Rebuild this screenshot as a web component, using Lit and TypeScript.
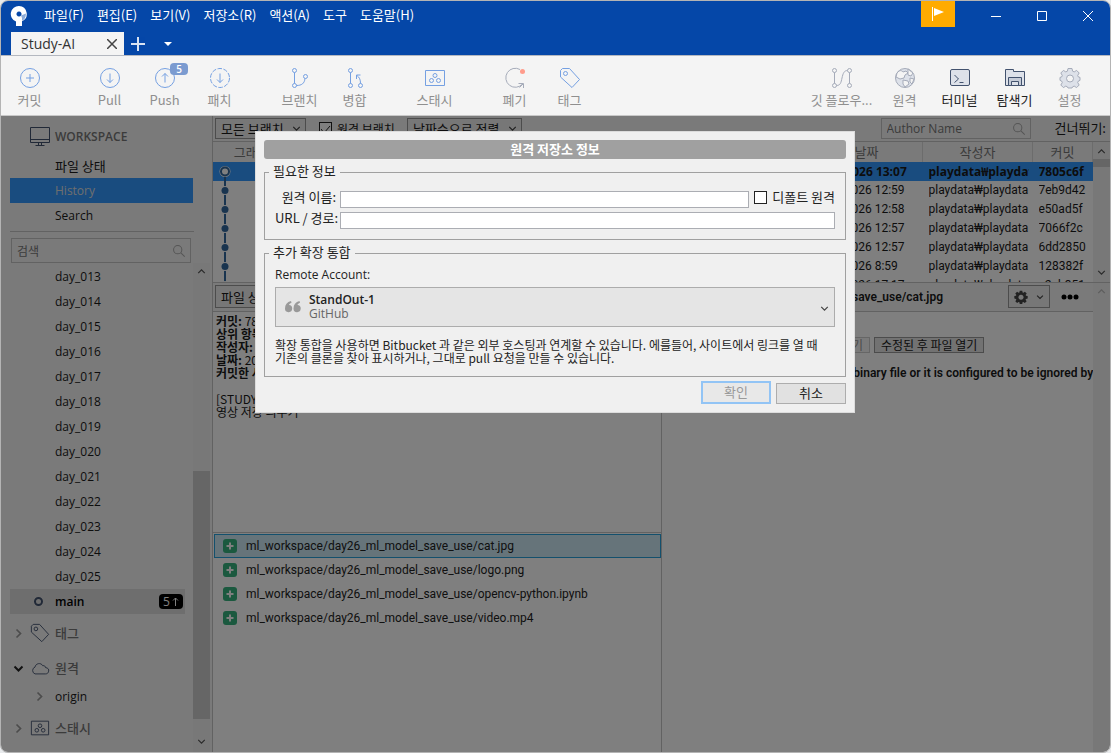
import { LitElement, html, css, svg, nothing } from "lit";
import { customElement, property } from "lit/decorators.js";

type Glyph = ReturnType<typeof svg>;

const ICONS: Record<string, Glyph> = {
  commit: svg`<circle cx="11" cy="11" r="9.5"/><path d="M11 7v8M7 11h8"/>`,
  pull: svg`<circle cx="11" cy="11" r="9.5"/><path d="M11 6.5v9M8 12.500l3 3 3-3"/>`,
  push: svg`<circle cx="11" cy="11" r="9.5"/><path d="M11 15.500v-9M8 9.500l3-3 3 3"/>`,
  fetch: svg`<circle cx="11" cy="11" r="9.500" stroke-dasharray="4.500 1.500"/><path d="M11 6.500v9M8 12.500l3 3 3-3"/>`,
  branch: svg`<circle cx="5.500" cy="3.500" r="2"/><circle cx="5.500" cy="18.500" r="2"/><circle cx="16.500" cy="9.500" r="2"/><path d="M5.500 5.500v11M7.500 18.500c5 0 8-2 8.500-7"/>`,
  merge: svg`<circle cx="6.500" cy="3.500" r="2"/><circle cx="6.500" cy="18.500" r="2"/><circle cx="16.500" cy="18.500" r="2"/><path d="M6.500 5.500v11M16.500 16.500c0-4-1-6-3.500-8M12.500 12V8h4"/>`,
  stash: svg`<path d="M1.500 3.500h19v15h-19z"/><circle cx="11" cy="8.500" r="2"/><circle cx="7.500" cy="13.500" r="2"/><circle cx="14.500" cy="13.500" r="2"/>`,
  discard: svg`<path d="M16 2.500A9.500 9.500 0 1 0 18.500 17M14.500 16.500h5v4.500M19 17l-3.500 3.500"/><circle cx="18.500" cy="4.500" r="2.500" fill="#ff9c8c" stroke="none"/>`,
  tag: svg`<path d="M1.500 3.500l2-2h7l10 11-7.500 8-11.500-10.500z" stroke-linejoin="round"/><circle cx="6.500" cy="6.500" r="2"/>`,
  flow: svg`<circle cx="3.500" cy="3.500" r="2"/><circle cx="3.500" cy="18.500" r="2"/><circle cx="18.500" cy="3.500" r="2"/><circle cx="18.500" cy="18.500" r="2"/><path d="M3.500 5.500v11M18.500 5.500v11M5.500 18.500c4 0 4.500-3 5.500-7.500s2-7.500 5.500-7.500"/>`,
  globe: svg`<circle cx="11" cy="11" r="9.500" fill="#dde1e9"/><path fill="#f4f4f4" d="M5 4c2-1 3 0 4 1l3-1 2 2-3 2-1 3-4 1-4-2 1-4zM14 2l5 4-2 3-3-1zM9 13l5 1 1 3-4 3-2-3zM16 11l4 1-2 5-2-2z"/>`,
  terminal: svg`<rect x="1.500" y="2.500" width="19" height="16" rx="1.500" fill="#dde1e9"/><path d="M5.500 8l4 4-4 3.500M10.500 15.500h4"/>`,
  explorer: svg`<path fill="#dde1e9" d="M1.500 18.500v-16h8v2h11v14z"/><path fill="#c6ccd8" d="M4.500 18.500v-8h13v8h-3v-4h-7v4z"/>`,
  gear: svg`<path fill="#dde1e9" d="M9 1.500h4l.6 2.700 1.600.7 2.400-1.500 2.600 2.600-1.500 2.400.7 1.600 1.600.4v3l-1.600.6-.7 1.600 1.500 2.400-2.600 2.600-2.400-1.500-1.600.7-.6 1.200H9l-.6-1.200-1.600-.7-2.400 1.500L1.800 18l1.500-2.400-.7-1.600-1.600-.6v-3l1.600-.4.7-1.600L1.800 6l2.600-2.600 2.400 1.500 1.600-.7z"/><circle cx="11" cy="11.500" r="3.500" fill="#f4f4f4"/>`,
  cog: svg`<path fill="currentColor" stroke="none" fill-rule="evenodd" d="M9 1h4l.5 2.900 1.300.5 2.300-1.700 2.900 2.900-1.700 2.300.6 1.300L21.500 9.500v4l-2.700.5-.6 1.300 1.700 2.300-2.900 2.900-2.300-1.700-1.300.6-.4 2.600H9l-.5-2.600-1.300-.6-2.300 1.700L2 17.600l1.700-2.300-.6-1.300-2.600-.5v-4l2.600-.3.600-1.300L2 5.600l2.900-2.900 2.300 1.700 1.300-.5zM11 7.500a4 4 0 1 0 .01 0z"/>`,
  monitor: svg`<path d="M1.500 1.500h19v15h-19zM1.500 13.500h19M9.500 17v2M12.500 17v2M6.500 19.500h9"/>`,
  cloud: svg`<path d="M5.500 17.500a4 4 0 0 1 0-7.500c.5-4 6.500-5.500 8.500-1.500 2-.5 3 .8 3 2 3 .5 4 2 3.500 4-.4 2-1.500 3-3.500 3z"/>`,
  search: svg`<circle cx="9" cy="9" r="6.500" stroke-width="1.600"/><path d="M14 14l6 6" stroke-width="1.600"/>`,
  chevronRight: svg`<path d="M7 3l8 8-8 8" stroke-width="3.500"/>`,
  chevronDown: svg`<path d="M3 7l8 8 8-8" stroke-width="4"/>`,
  up: svg`<path d="M3 15l8-8 8 8" stroke-width="3"/>`,
  down: svg`<path d="M3 7l8 8 8-8" stroke-width="3"/>`,
};

const icon = (name: string, size = 22) =>
  html`<svg class="icon" viewBox="0 0 22 22" width=${size} height=${size} aria-hidden="true">${ICONS[name]}</svg>`;

const shared = css`
  * { box-sizing: border-box; }
  button, input, select { font: inherit; color: inherit; margin: 0; border-radius: 0; }
  button { padding: 0; border: 0; background: none; }
  .icon { display: block; flex: none; fill: none; stroke: currentColor; stroke-width: 1; overflow: visible; }
  .latin { font-family: "Open Sans", "Noto Sans CJK KR", sans-serif; font-size: 12px; }
  .narrow { font-family: Roboto, "Noto Sans CJK KR", sans-serif; font-size: 12px; }
`;

@customElement("title-bar")
export class TitleBar extends LitElement {
  static styles = [shared, css`
    :host { display: block; background: #0547a8; color: #fff; }
    .top { display: flex; height: 31px; align-items: flex-start; }
    .logo { margin: 4px 16px 0 9px; }
    .menu { display: flex; gap: 13px; height: 27px; align-items: center; }
    .spacer { flex: 1; }
    .flag { width: 34px; height: 26px; background: #ffab00; display: grid; place-items: center; margin-right: 18px; }
    .sys { width: 46px; height: 29px; display: grid; place-items: center; }
    .sys:last-child { width: 45px; }
    .tabs { display: flex; height: 23px; padding-left: 10px; align-items: stretch; }
    .tab { width: 113px; background: #f4f4f4; color: #333; display: flex; align-items: center; justify-content: space-between; padding: 0 7px 0 10px; }
    .tab-name { font: 14px/23px "Open Sans", sans-serif; }
    .add { width: 28px; display: grid; place-items: center; }
    .more { width: 31px; display: grid; place-items: center; }
  `];
  render() {
    const menus = ["파일(F)", "편집(E)", "보기(V)", "저장소(R)", "액션(A)", "도구", "도움말(H)"];
    return html`
      <div class="top">
        <svg class="logo" width="18" height="22" viewBox="0 0 18 22" aria-hidden="true">
          <path fill="#fff" fill-rule="evenodd" d="M9 1a8 8 0 0 1 3 15.300V21H6v-4.500A8 8 0 0 1 9 1zm0 5.500a2.500 2.500 0 1 0 .01 0z"/>
          <path fill="#0547a8" opacity=".45" d="M11 10.500l5-2c-.2 4-1.500 6-4 7.300V13z"/>
        </svg>
        <nav class="menu">${menus.map((m) => html`<button>${m}</button>`)}</nav>
        <span class="spacer"></span>
        <button class="flag" aria-label="알림"><svg width="12" height="14" viewBox="0 0 12 14"><path d="M0 0h1v14H0zM2 1l10 4-10 4z" fill="#fff"/></svg></button>
        <button class="sys" aria-label="최소화"><svg width="10" height="10"><path d="M0 5.500h10" stroke="#fff"/></svg></button>
        <button class="sys" aria-label="최대화"><svg width="10" height="10"><path d="M.5.500h9v9h-9z" stroke="#fff" fill="none"/></svg></button>
        <button class="sys" aria-label="닫기"><svg width="10" height="10"><path d="M0 0l10 10M10 0L0 10" stroke="#fff"/></svg></button>
      </div>
      <div class="tabs">
        <div class="tab"><span class="tab-name">Study-AI</span>
          <button aria-label="탭 닫기"><svg width="10" height="10"><path d="M0 0l10 10M10 0L0 10" stroke="#444" stroke-width="1.500"/></svg></button></div>
        <button class="add" aria-label="새 탭"><svg width="14" height="14"><path d="M7 0v14M0 7h14" stroke="#fff" stroke-width="2" opacity=".85"/></svg></button>
        <button class="more" aria-label="탭 목록"><svg width="8" height="4"><path d="M0 0h8l-4 4z" fill="#fff"/></svg></button>
      </div>`;
  }
}

@customElement("tool-bar")
export class ToolBar extends LitElement {
  static styles = [shared, css`
    :host { display: flex; justify-content: space-between; height: 61px; background: #f4f4f4; border-top: 1px solid #b4b8c0; border-bottom: 1px solid #c8c8c8; padding: 0 13px 0 1px; }
    .side, .group { display: flex; }
    .side { gap: 25px; }
    .tool { width: 55px; display: flex; flex-direction: column; align-items: center; padding-top: 11px; gap: 2px; position: relative; color: #8f8f8f; line-height: 18px; white-space: nowrap; }
    .tool.wide { width: 71px; }
    .tool .icon { color: #75a0e2; }
    .tool.gray .icon { color: #a5abb9; }
    .tool.active { color: #222; }
    .tool.active .icon { color: #42526e; }
    .badge { position: absolute; left: 33px; top: 7px; width: 18px; height: 12px; border-radius: 4px; background: #7b9bd0; color: #fff; font: 600 10px/12px "Open Sans", sans-serif; text-align: center; }
  `];
  tool(name: string, label: string, cls = "", badge = "") {
    return html`<button class="tool ${cls}">${icon(name)}<span>${label}</span>${badge ? html`<span class="badge">${badge}</span>` : nothing}</button>`;
  }
  render() {
    return html`
      <div class="side">
        <div class="group">${this.tool("commit", "커밋")}</div>
        <div class="group">${this.tool("pull", "Pull")}${this.tool("push", "Push", "", "5")}${this.tool("fetch", "패치")}</div>
        <div class="group">${this.tool("branch", "브랜치")}${this.tool("merge", "병합")}</div>
        <div class="group">${this.tool("stash", "스태시")}</div>
        <div class="group">${this.tool("discard", "폐기", "gray")}${this.tool("tag", "태그")}</div>
      </div>
      <div class="group">
        ${this.tool("flow", "깃 플로우...", "gray wide")}${this.tool("globe", "원격", "gray")}
        ${this.tool("terminal", "터미널", "active")}${this.tool("explorer", "탐색기", "active")}${this.tool("gear", "설정", "gray")}
      </div>`;
  }
}

@customElement("side-bar")
export class SideBar extends LitElement {
  static styles = [shared, css`
    :host { display: flex; flex-direction: column; width: 212px; flex: none; background: #f5f5f5; border-right: 1px solid #c4c4c4; color: #1a1a1a; min-height: 0; }
    .head { display: flex; align-items: center; gap: 4px; height: 42px; padding-left: 28px; color: #777; }
    .head .icon, .section .icon { color: #42526e; }
    .head strong { font: 600 12px/18px "Open Sans", sans-serif; }
    .nav { padding: 0 19px 3px 9px; margin-top: -5px; }
    .nav button { display: block; width: 100%; height: 25px; text-align: left; padding-left: 45px; }
    .nav .current { background: #39f; color: #ddd; }
    .rule { border-top: 1px solid #c4c4c4; margin: 0 18px 0 9px; }
    .find { margin: 6px 21px 0 10px; display: flex; align-items: center; border: 1px solid #c4c4c4; height: 25px; padding-right: 4px; color: #aaa; }
    .find input { flex: 1; min-width: 0; border: 0; background: none; padding: 0 5px; font-size: 12px; }
    .find input::placeholder { color: #777; opacity: 1; }
    .scroll { display: flex; flex: 1; min-height: 0; }
    .tree { flex: 1; min-width: 0; overflow: hidden; padding: 1px 0 0 9px; }
    .leaf { display: flex; align-items: center; height: 25px; padding-left: 45px; }
    .leaf.main { margin-right: 8px; background: #ddd; font-weight: 600; padding: 0 2px 0 24px; gap: 12px; color: #000; }
    .main .name { flex: 1; }
    .ring { width: 9px; height: 9px; border: 2px solid #42526e; border-radius: 50%; }
    .ahead { background: #000; color: #fff; border-radius: 4px; width: 24px; height: 15px; line-height: 15px; font-weight: 400; display: flex; justify-content: center; gap: 2px; }
    .section { display: flex; align-items: center; gap: 5px; height: 32px; color: #777; font-weight: 500; }
    .section.first { height: 38px; }
    .section .fold { width: 15px; padding-left: 3px; }
    .section .fold .icon { color: #999; }
    .section .fold.open .icon { color: #222; }
    .leaf.origin { padding-left: 24px; gap: 10px; }
    .origin .icon { color: #999; }
    .bar { width: 17px; margin-right: 2px; display: flex; flex-direction: column; align-items: center; color: #555; background: #f0f0f0; padding: 4px 0 6px; }
    .track { flex: 1; width: 100%; padding: 195px 0 18px; display: flex; }
    .thumb { flex: 1; background: #cdcdcd; }
  `];
  render() {
    const days = Array.from({ length: 13 }, (_, i) => `day_0${i + 13}`);
    return html`
      <div class="head">${icon("monitor", 22)}<strong>WORKSPACE</strong></div>
      <nav class="nav">
        <button>파일 상태</button><button class="current latin">History</button><button class="latin">Search</button>
      </nav>
      <div class="rule"></div>
      <label class="find"><input aria-label="검색" placeholder="검색" />${icon("search", 14)}</label>
      <div class="scroll">
        <div class="tree">
          ${days.map((d) => html`<div class="leaf latin">${d}</div>`)}
          <div class="leaf main latin"><span class="ring"></span><span class="name">main</span>
            <span class="ahead">5<svg width="7" height="15" aria-hidden="true"><path d="M3.500 12V4M1 6.500L3.500 4 6 6.500" fill="none" stroke="#fff"/></svg></span></div>
          <div class="section first"><span class="fold">${icon("chevronRight", 11)}</span>${icon("tag", 20)}<span>태그</span></div>
          <div class="section"><span class="fold open">${icon("chevronDown", 11)}</span>${icon("cloud", 20)}<span>원격</span></div>
          <div class="leaf origin latin">${icon("chevronRight", 11)}origin</div>
          <div class="section first"><span class="fold">${icon("chevronRight", 11)}</span>${icon("stash", 20)}<span>스태시</span></div>
        </div>
        <div class="bar">${icon("up", 9)}<div class="track"><div class="thumb"></div></div>${icon("down", 9)}</div>
      </div>`;
  }
}

interface Row { date: string; hash: string; author: string; }

@customElement("commit-log")
export class CommitLog extends LitElement {
  static styles = [shared, css`
    :host { display: flex; flex-direction: column; height: 167px; flex: none; border-bottom: 1px solid #c4c4c4; background: #fff; }
    .filters { display: flex; align-items: center; height: 26px; flex: none; border-bottom: 1px solid #c4c4c4; background: #f5f5f5; padding: 0 4px 0 2px; }
    .pick { position: relative; display: flex; align-items: center; }
    .pick select { appearance: none; height: 21px; border: 1px solid #999; background: #eee; padding: 0 21px 0 5px; }
    .pick .icon { position: absolute; right: 5px; color: #444; pointer-events: none; }
    .check { position: relative; display: flex; align-items: center; gap: 5px; margin: 0 12px 0 13px; font-size: 12px; }
    .check input { appearance: none; width: 13px; height: 13px; border: 1px solid #222; background: #fff; }
    .check svg { position: absolute; left: 2px; top: 5px; pointer-events: none; }
    .spacer { flex: 1; }
    .author { display: flex; align-items: center; width: 150px; height: 21px; border: 1px solid #c4c4c4; padding-right: 4px; color: #aaa; margin-right: 24px; }
    .author input { flex: 1; min-width: 0; border: 0; background: none; padding: 0 5px; }
    .author input::placeholder { color: #777; opacity: 1; }
    .jump { line-height: 16px; padding-bottom: 2px; }
    .list { display: flex; flex: 1; min-height: 0; overflow: hidden; }
    .rows { flex: 1; min-width: 0; overflow: hidden; }
    table { width: 100%; table-layout: fixed; border-collapse: collapse; }
    th { height: 20px; padding: 0; font-weight: 400; color: #777; background: #f5f5f5; border-right: 1px solid #d8d8d8; line-height: 18px; }
    td { height: 19px; padding: 0 4px 0 6px; line-height: 19px; }
    td:first-child { padding: 0; }
    td.when { padding-left: 8px; }
    td div { overflow: hidden; white-space: nowrap; height: 19px; }
    .on { background: #39f; font-weight: 700; }
    .graph { width: 78px; } .date { width: 112px; } .who { width: 110px; } .hash { width: 60px; }
    .bar { width: 17px; background: #f0f0f0; display: flex; flex-direction: column; align-items: center; color: #555; padding: 5px 0; }
    .thumb { width: 100%; height: 8px; background: #cdcdcd; margin: 3px 0 auto; }
    td svg { display: block; }
  `];
  rows: Row[] = [
    { date: "27 2 2026 13:07", author: "playdata₩playdata", hash: "7805c6f" },
    { date: "27 2 2026 12:59", author: "playdata₩playdata", hash: "7eb9d42" },
    { date: "27 2 2026 12:58", author: "playdata₩playdata", hash: "e50ad5f" },
    { date: "27 2 2026 12:57", author: "playdata₩playdata", hash: "7066f2c" },
    { date: "27 2 2026 12:57", author: "playdata₩playdata", hash: "6dd2850" },
    { date: "27 2 2026 8:59", author: "playdata₩playdata", hash: "128382f" },
    { date: "26 2 2026 17:17", author: "playdata₩playdata", hash: "e2eb351" },
  ];
  render() {
    return html`
      <div class="filters">
        <span class="pick"><select aria-label="브랜치"><option>모든 브랜치</option></select>${icon("down", 9)}</span>
        <label class="check"><input type="checkbox" checked />원격 브랜치<svg width="10" height="9"><path d="M0 4l3 4 6-7" fill="none" stroke="#222"/></svg></label>
        <span class="pick"><select aria-label="정렬"><option>날짜순으로 정렬</option></select>${icon("down", 9)}</span>
        <span class="spacer"></span>
        <label class="author latin"><input aria-label="Author Name" placeholder="Author Name" />${icon("search", 14)}</label>
        <span class="jump">건너뛰기:</span>
      </div>
      <div class="list">
        <div class="rows"><table>
          <thead><tr><th class="graph">그래프</th><th>설명</th><th class="date">날짜</th><th class="who">작성자</th><th class="hash">커밋</th></tr></thead>
          <tbody>${this.rows.map((r, i) => html`<tr class=${i ? "narrow" : "latin on"}>
            <td><svg width="24" height="19" aria-hidden="true">
              <path d=${i ? "M12 0v19" : "M12 10v9"} stroke="#33689e" stroke-width="2"/>
              ${i ? svg`<circle cx="12" cy="9.500" r="4.500" fill="#fff"/><circle cx="12" cy="9.500" r="3.500" fill="#33689e"/>`
                  : svg`<circle cx="12" cy="9.500" r="5.500" fill="#fff"/><circle cx="12" cy="9.500" r="4" fill="#fff" stroke="#33689e" stroke-width="2"/>`}
            </svg></td>
            <td></td><td class="when"><div>${r.date}</div></td><td><div>${r.author}</div></td><td><div>${r.hash}</div></td></tr>`)}</tbody>
        </table></div>
        <div class="bar">${icon("up", 9)}<span class="thumb"></span>${icon("down", 9)}</div>
      </div>`;
  }
}

@customElement("commit-detail")
export class CommitDetail extends LitElement {
  static styles = [shared, css`
    :host { display: flex; flex: 1; min-height: 0; background: #fff; }
    .left { width: 449px; flex: none; display: flex; flex-direction: column; border-right: 1px solid #c4c4c4; }
    .bar { height: 29px; flex: none; display: flex; align-items: center; background: #f5f5f5; border-bottom: 1px solid #c4c4c4; padding: 0 2px 1px; }
    .bar button { height: 23px; border: 1px solid #999; background: #eee; padding: 0 5px; }
    .info { height: 221px; flex: none; padding: 2px 3px; font-size: 12px; line-height: 13px; border-bottom: 1px solid #c4c4c4; }
    .info p { margin: 0; min-height: 13px; }
    .info b { font-weight: 600; }
    .files { margin: 0; padding: 1px 0 0 1px; list-style: none; }
    .file { display: flex; align-items: center; gap: 9px; height: 24px; padding-left: 8px; border: 1px solid transparent; color: #222; }
    .file.on { background: #cce8f5; border-color: #26a0da; }
    .right { flex: 1; min-width: 0; display: flex; }
    .view { flex: 1; min-width: 0; overflow: hidden; }
    .title { justify-content: flex-end; padding-right: 14px; font-weight: 600; white-space: nowrap; }
    .title > * { flex: none; }
    .title .gear { display: flex; align-items: center; gap: 8px; width: 42px; margin: 0 11px 0 65px; color: #444; }
    .acts { display: flex; gap: 4px; padding: 25px 0 0 99px; }
    .acts button { height: 16px; line-height: 14px; border: 1px solid #999; background: #e4e4e4; padding: 0 6px; font-size: 12px; }
    .acts button:disabled { color: #999; border-color: #ccc; background: #f5f5f5; }
    .acts button:first-child { width: 109px; text-align: right; }
    .note { margin: 11px 0 0 66px; white-space: nowrap; font-weight: 600; line-height: 18px; }
    .scroll { width: 17px; background: #f0f0f0; display: flex; justify-content: center; padding-top: 4px; color: #bbb; }
  `];
  render() {
    const files = ["cat.jpg", "logo.png", "opencv-python.ipynb", "video.mp4"];
    return html`
      <section class="left">
        <div class="bar"><button>파일 상태 순으로 정렬</button></div>
        <div class="info">
          <p><b>커밋:</b> 7805c6f</p><p><b>상위 항목:</b> 7eb9d42</p><p><b>작성자:</b> playdata</p>
          <p><b>날짜:</b> 2026 13:07</p><p><b>커밋한 사람:</b> playdata</p><p></p>
          <p>[STUDY]</p><p>영상 저장 띄우기</p>
        </div>
        <ul class="files">${files.map((f, i) => html`<li class="file narrow ${i ? "" : "on"}">
          <svg width="14" height="14" aria-hidden="true"><rect width="14" height="14" rx="3" fill="#36b37e"/><path d="M7 3.500v7M3.500 7h7" stroke="#fff" stroke-width="2"/></svg>
          <span>ml_workspace/day26_ml_model_save_use/${f}</span></li>`)}</ul>
      </section>
      <section class="right">
        <div class="view">
          <div class="bar title narrow"><span>ml_workspace/day26_ml_model_save_use/cat.jpg</span>
            <button class="gear" aria-label="설정">${icon("cog", 14)}${icon("down", 8)}</button>
            <svg width="18" height="6" aria-hidden="true"><circle cx="3" cy="3" r="2.500"/><circle cx="9" cy="3" r="2.500"/><circle cx="15" cy="3" r="2.500"/></svg></div>
          <div class="acts"><button disabled>원본 파일 열기</button><button>수정된 후 파일 열기</button></div>
          <p class="note narrow">Selected file is either a binary file or it is configured to be ignored by Sourcetree</p>
        </div>
        <div class="scroll">${icon("up", 9)}</div>
      </section>`;
  }
}

@customElement("remote-dialog")
export class RemoteDialog extends LitElement {
  @property() account = "StandOut-1";
  static styles = [shared, css`
    :host { display: block; width: 600px; border: 1px solid #dcdcdc; background: #f0f0f0; padding: 8px; color: #222; }
    h2 { margin: 0 0 5px; height: 19px; line-height: 18px; font-size: 13px; font-weight: 700; color: #fff; background: #a0a0a0; border-radius: 3px; text-align: center; }
    fieldset { border: 1px solid #a0a0a0; margin: 0; padding: 0 10px; min-width: 0; }
    legend { padding: 0 4px; margin-left: -6px; height: 16px; line-height: 14px; }
    .basic { height: 76px; }
    .fields { display: grid; grid-template-columns: 61px 1fr auto; column-gap: 4px; row-gap: 4px; padding-top: 11px; align-items: start; }
    .fields label { text-align: right; line-height: 12px; white-space: nowrap; }
    .fields input[type="text"] { width: 100%; height: 17px; border: 1px solid #abadb3; background: #fff; padding: 0 3px; }
    .fields .url { grid-column: 2 / 4; }
    .fields .def { display: flex; gap: 5px; padding-left: 1px; }
    .def input { appearance: none; width: 13px; height: 13px; border: 1px solid #222; background: #fff; }
    .extra { height: 132px; margin-top: 5px; }
    .cap { display: block; line-height: 18px; padding-top: 5px; }
    .account { position: relative; margin-top: 3px; height: 40px; }
    .account select { appearance: none; width: 100%; height: 40px; border: 1px solid #acacac; background: #e5e5e5; padding: 0 24px 15px 33px; font-weight: 600; color: #222; }
    .account .host { position: absolute; left: 34px; top: 19px; line-height: 16px; color: #666; pointer-events: none; }
    .account .quote { position: absolute; left: 10px; top: 14px; pointer-events: none; }
    .account .icon { position: absolute; right: 6px; top: 17px; color: #444; pointer-events: none; }
    .help { margin: 11px 0 0; font-size: 12px; line-height: 13px; word-break: keep-all; }
    .foot { display: flex; justify-content: flex-end; align-items: flex-end; gap: 5px; margin-top: 4px; }
    .foot button { width: 70px; height: 21px; border: 1px solid #adadad; background: #e1e1e1; line-height: 16px; padding-bottom: 2px; }
    .foot .ok { height: 23px; border: 2px solid #92c4f5; background: #e8e8e8; color: #999; }
  `];
  render() {
    return html`
      <h2>원격 저장소 정보</h2>
      <fieldset class="basic"><legend>필요한 정보</legend>
        <div class="fields">
          <label for="name">원격 이름:</label><input id="name" type="text" />
          <label class="def"><input type="checkbox" />디폴트 원격</label>
          <label for="url">URL / 경로:</label><input id="url" class="url" type="text" />
        </div>
      </fieldset>
      <fieldset class="extra"><legend>추가 확장 통합</legend>
        <label class="cap latin" for="acct">Remote Account:</label>
        <div class="account latin">
          <select id="acct"><option>${this.account}</option></select>
          <span class="host">GitHub</span>
          <svg class="quote" width="16" height="12" viewBox="0 0 16 12" aria-hidden="true"><path fill="#999" d="M6 0C2 1 0 3.500 0 7.500a3.600 3.600 0 1 0 4-3.500C4.300 3 5 2.300 6.500 1.800zM14.500 0c-4 1-6 3.500-6 7.500a3.600 3.600 0 1 0 4-3.500c.3-1 1-1.700 2.500-2.200z"/></svg>
          ${icon("down", 9)}
        </div>
        <p class="help">확장 통합을 사용하면 Bitbucket 과 같은 외부 호스팅과 연계할 수 있습니다. 에를들어, 사이트에서 링크를 열 때 기존의 클론을 찾아 표시하거나, 그대로 pull 요청을 만들 수 있습니다.</p>
      </fieldset>
      <div class="foot"><button class="ok" disabled>확인</button><button>취소</button></div>`;
  }
}

@customElement("app-root")
export class AppRoot extends LitElement {
  static styles = [shared, css`
    :host { display: block; height: 100vh; background: #e8eaec; font: 13px/18px "Noto Sans CJK KR", sans-serif; color: #1a1a1a; }
    .window { height: 100%; display: flex; flex-direction: column; border: 1px solid #b4b4b4; border-radius: 8px; overflow: hidden; }
    .body { flex: 1; min-height: 0; display: flex; position: relative; }
    .work { flex: 1; min-width: 0; display: flex; flex-direction: column; }
    .scrim { position: absolute; inset: 0; background: rgba(0, 0, 0, 0.5); padding: 15px 1px 0 0; display: flex; justify-content: center; align-items: flex-start; }
  `];
  render() {
    return html`<div class="window">
      <title-bar></title-bar>
      <tool-bar></tool-bar>
      <div class="body">
        <side-bar></side-bar>
        <main class="work"><commit-log></commit-log><commit-detail></commit-detail></main>
        <div class="scrim"><remote-dialog role="dialog" aria-label="원격 저장소 정보"></remote-dialog></div>
      </div>
    </div>`;
  }
}
